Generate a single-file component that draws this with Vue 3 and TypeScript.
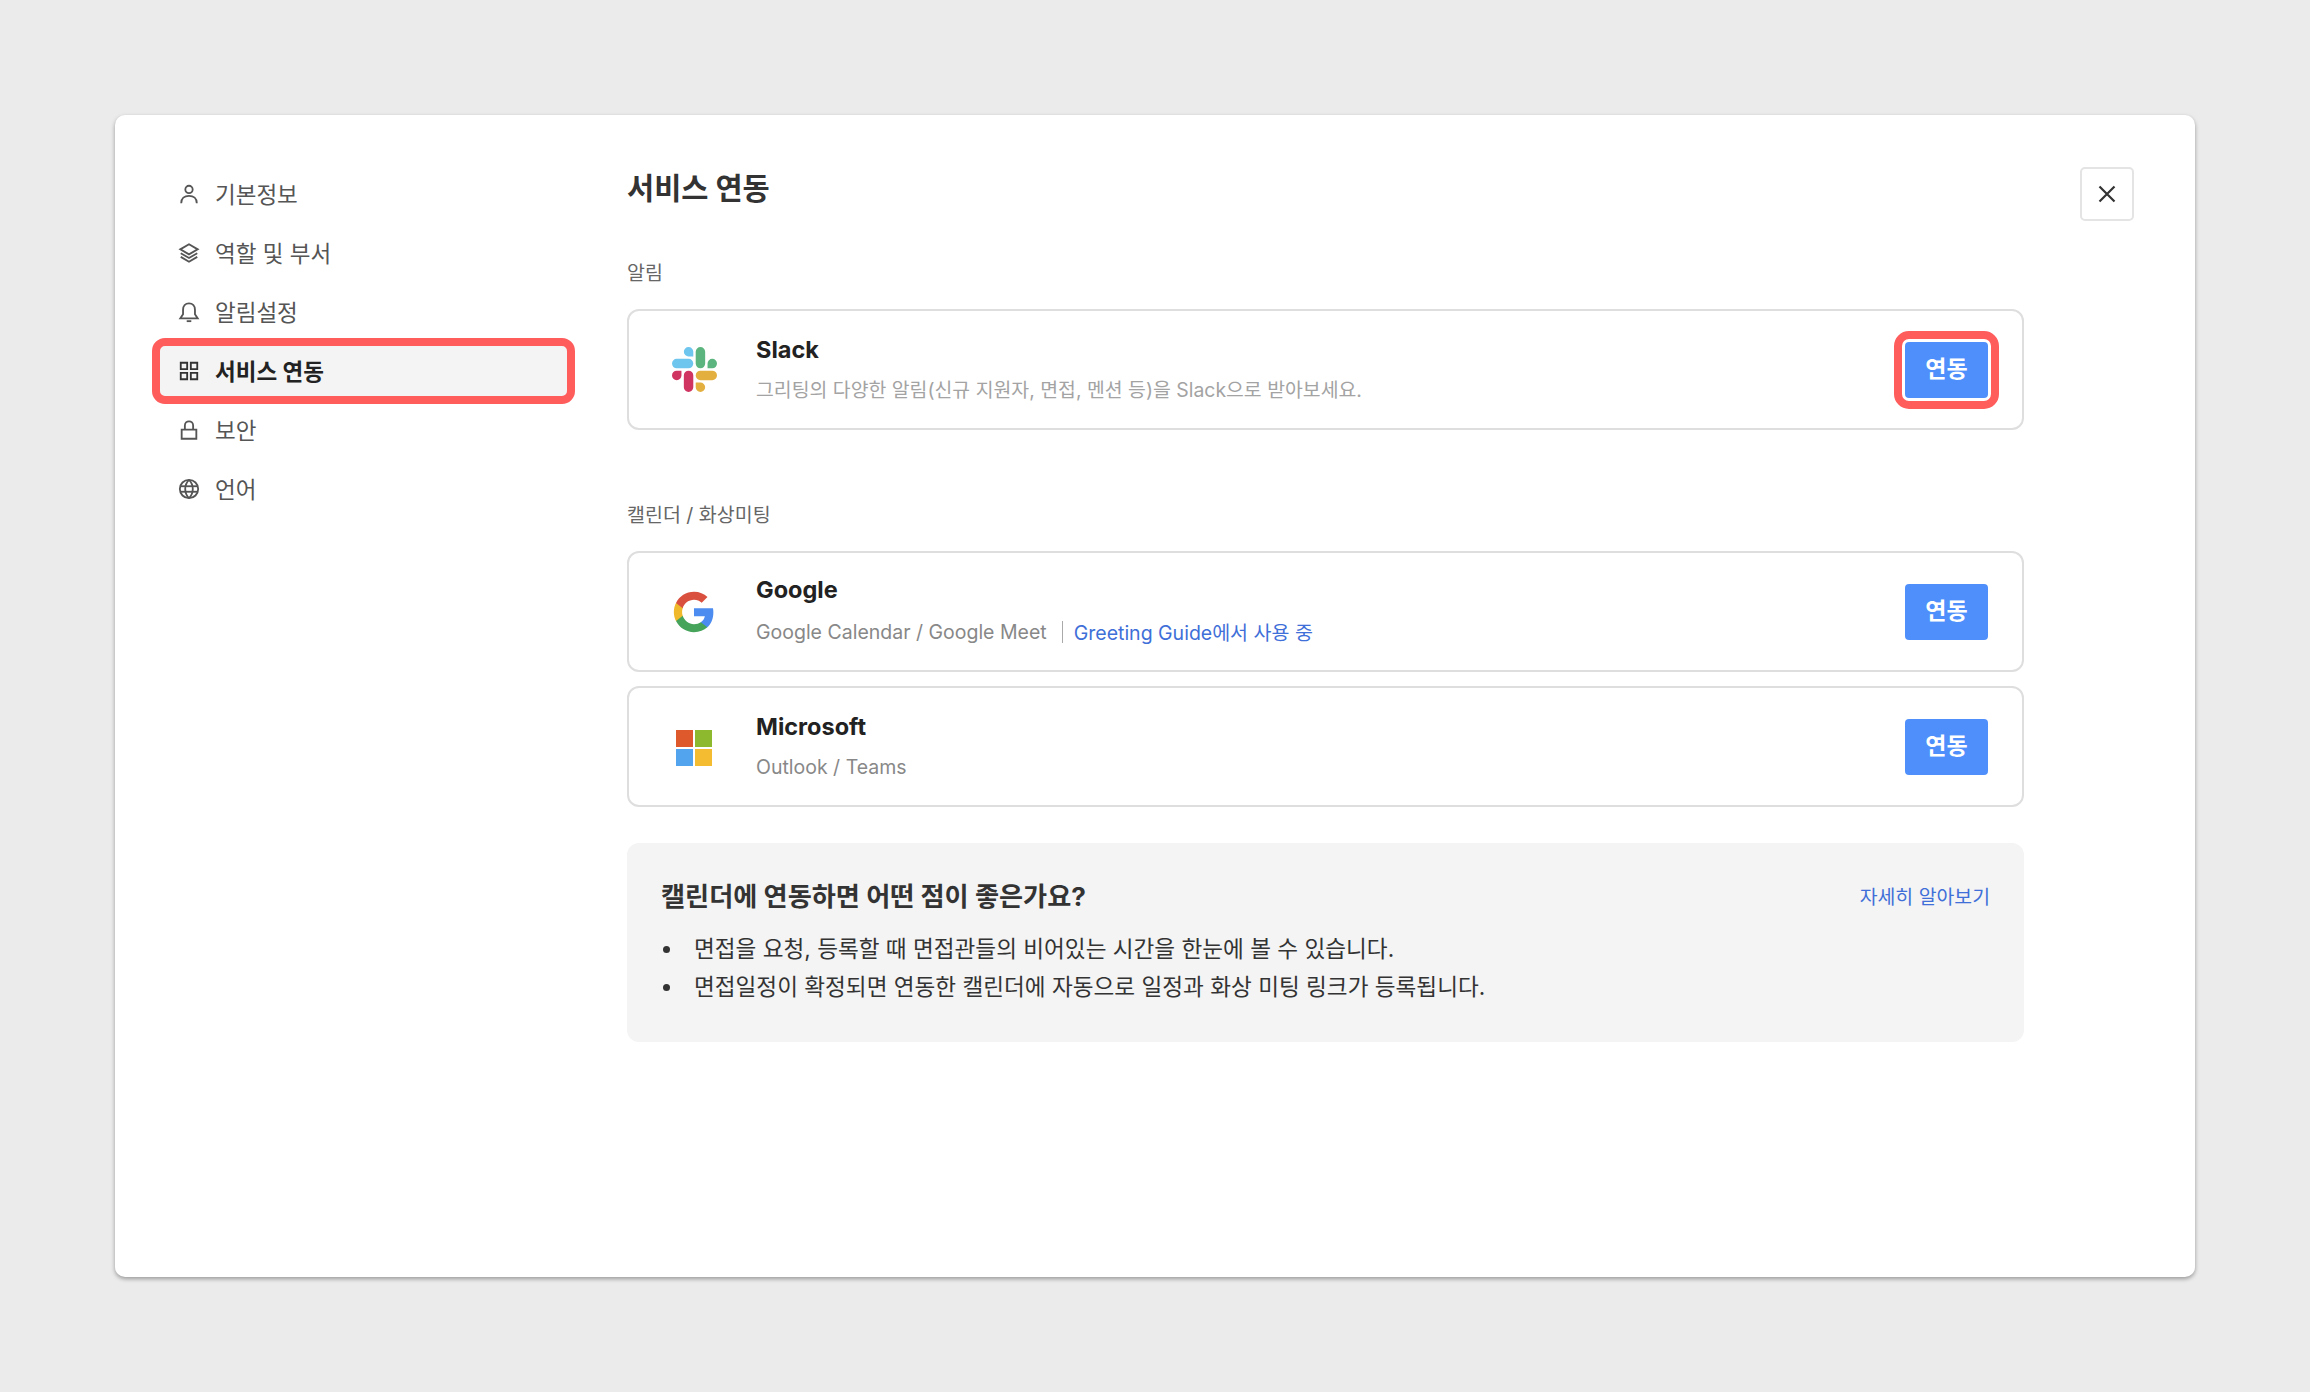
<template>
  <div class="page">
    <div class="dialog">
      <nav class="side">
        <a
          v-for="item in menu"
          :key="item.label"
          class="side-item"
          :class="{ active: item.active }"
        >
          <svg class="side-icon" viewBox="0 0 24 24" fill="none">
            <path v-for="(d, i) in item.paths" :key="i" :d="d" />
          </svg>
          <span>{{ item.label }}</span>
        </a>
      </nav>

      <main class="main">
        <h1 class="title">서비스 연동</h1>

        <div class="label first">알림</div>
        <div class="card">
          <div class="logo">
            <svg width="45" height="45" viewBox="0 0 24 24">
              <path fill="#cf3560" d="M5.042 15.165a2.528 2.528 0 0 1-2.52 2.523A2.528 2.528 0 0 1 0 15.165a2.527 2.527 0 0 1 2.522-2.52h2.52v2.52zM6.313 15.165a2.527 2.527 0 0 1 2.521-2.52 2.527 2.527 0 0 1 2.521 2.52v6.313A2.528 2.528 0 0 1 8.834 24a2.528 2.528 0 0 1-2.521-2.522v-6.313z" />
              <path fill="#6ec6ee" d="M8.834 5.042a2.528 2.528 0 0 1-2.521-2.52A2.528 2.528 0 0 1 8.834 0a2.528 2.528 0 0 1 2.521 2.522v2.52H8.834zM8.834 6.313a2.528 2.528 0 0 1 2.521 2.521 2.528 2.528 0 0 1-2.521 2.521H2.522A2.528 2.528 0 0 1 0 8.834a2.528 2.528 0 0 1 2.522-2.521h6.312z" />
              <path fill="#5cb57f" d="M18.956 8.834a2.528 2.528 0 0 1 2.522-2.521A2.528 2.528 0 0 1 24 8.834a2.528 2.528 0 0 1-2.522 2.521h-2.522V8.834zM17.688 8.834a2.528 2.528 0 0 1-2.523 2.521 2.527 2.527 0 0 1-2.52-2.521V2.522A2.527 2.527 0 0 1 15.165 0a2.528 2.528 0 0 1 2.523 2.522v6.312z" />
              <path fill="#e3b040" d="M15.165 18.956a2.528 2.528 0 0 1 2.523 2.522A2.528 2.528 0 0 1 15.165 24a2.527 2.527 0 0 1-2.52-2.522v-2.522h2.52zM15.165 17.688a2.527 2.527 0 0 1-2.52-2.523 2.526 2.526 0 0 1 2.52-2.52h6.313A2.527 2.527 0 0 1 24 15.165a2.528 2.528 0 0 1-2.522 2.523h-6.313z" />
            </svg>
          </div>
          <div class="info">
            <div class="name">Slack</div>
            <div class="desc light">그리팅의 다양한 알림(신규 지원자, 면접, 멘션 등)을 Slack으로 받아보세요.</div>
          </div>
          <button class="link-btn marked"><span>연동</span></button>
        </div>

        <div class="label second">캘린더 / 화상미팅</div>
        <div class="card">
          <div class="logo">
            <svg width="44" height="44" viewBox="0 0 24 24">
              <path fill="#4c8bf0" d="M22.56 12.25c0-.78-.07-1.53-.2-2.25H12v4.26h5.92c-.26 1.37-1.04 2.53-2.21 3.31v2.77h3.57c2.08-1.92 3.28-4.74 3.28-8.09z" />
              <path fill="#45a35a" d="M12 23c2.97 0 5.46-.98 7.28-2.66l-3.57-2.77c-.98.66-2.23 1.06-3.71 1.06-2.86 0-5.29-1.93-6.16-4.53H2.18v2.84C3.99 20.53 7.7 23 12 23z" />
              <path fill="#f0b92c" d="M5.84 14.09c-.22-.66-.35-1.36-.35-2.09s.13-1.43.35-2.09V7.07H2.18C1.43 8.55 1 10.22 1 12s.43 3.45 1.18 4.93l2.85-2.22.81-.62z" />
              <path fill="#d9503f" d="M12 5.38c1.62 0 3.06.56 4.21 1.64l3.15-3.15C17.45 2.09 14.97 1 12 1 7.7 1 3.99 3.47 2.18 7.07l3.66 2.84c.87-2.6 3.3-4.53 6.16-4.53z" />
            </svg>
          </div>
          <div class="info">
            <div class="name">Google</div>
            <div class="desc">
              <span>Google Calendar / Google Meet</span>
              <i class="bar"></i>
              <span class="used">Greeting Guide에서 사용 중</span>
            </div>
          </div>
          <button class="link-btn"><span>연동</span></button>
        </div>
        <div class="card next">
          <div class="logo">
            <div class="ms">
              <b style="background: #de5a2c"></b>
              <b style="background: #8db92e"></b>
              <b style="background: #52a4ee"></b>
              <b style="background: #f4bc30"></b>
            </div>
          </div>
          <div class="info">
            <div class="name">Microsoft</div>
            <div class="desc">Outlook / Teams</div>
          </div>
          <button class="link-btn"><span>연동</span></button>
        </div>

        <section class="note">
          <div class="note-head">
            <strong>캘린더에 연동하면 어떤 점이 좋은가요?</strong>
            <a class="more">자세히 알아보기</a>
          </div>
          <ul>
            <li>면접을 요청, 등록할 때 면접관들의 비어있는 시간을 한눈에 볼 수 있습니다.</li>
            <li>면접일정이 확정되면 연동한 캘린더에 자동으로 일정과 화상 미팅 링크가 등록됩니다.</li>
          </ul>
        </section>
      </main>

      <button class="close" aria-label="닫기">
        <svg width="22" height="22" viewBox="0 0 22 22" fill="none">
          <path d="M3.5 3.5l15 15M18.5 3.5l-15 15" stroke="#333" stroke-width="2.2" />
        </svg>
      </button>
    </div>
  </div>
</template>

<script setup lang="ts">
interface MenuItem {
  label: string
  paths: string[]
  active?: boolean
}

const menu: MenuItem[] = [
  {
    label: '기본정보',
    paths: ['M12 3a4 4 0 1 1 0 8 4 4 0 0 1 0-8z', 'M3.5 22c0-5 3.5-8 8.5-8s8.5 3 8.5 8'],
  },
  {
    label: '역할 및 부서',
    paths: [
      'M12 2.5l9.5 5.5-9.5 5.5L2.5 8z',
      'M3 12.2l9 5.3 9-5.3',
      'M3 16.2l9 5.3 9-5.3',
    ],
  },
  {
    label: '알림설정',
    paths: [
      'M12 2.5c-4 0-6.5 3-6.5 7v5L2.5 19h19l-3-4.5v-5c0-4-2.5-7-6.5-7z',
      'M9.5 22h5',
    ],
  },
  {
    label: '서비스 연동',
    active: true,
    paths: [
      'M3 3h7v7H3z',
      'M14 3h7v7h-7z',
      'M3 14h7v7H3z',
      'M14 14h7v7h-7z',
    ],
  },
  {
    label: '보안',
    paths: ['M4 11.5h16v10H4z', 'M7.5 11.5V7a4.5 4.5 0 0 1 9 0v4.5'],
  },
  {
    label: '언어',
    paths: [
      'M12 2a10 10 0 1 1 0 20 10 10 0 0 1 0-20z',
      'M12 2c-5.5 5.5-5.5 14.5 0 20',
      'M12 2c5.5 5.5 5.5 14.5 0 20',
      'M2.5 9h19',
      'M2.5 15h19',
    ],
  },
]
</script>

<style>
html,
body {
  margin: 0;
  background: #ebebeb;
}
</style>

<style scoped>
.page {
  width: 2310px;
  height: 1392px;
  box-sizing: border-box;
  padding: 115px;
  font-family: Inter, "Noto Sans CJK KR", sans-serif;
  color: #222;
}

.dialog {
  width: 2080px;
  height: 1162px;
  box-sizing: border-box;
  display: flex;
  align-items: flex-start;
  padding: 52px 0 0 45px;
  background: #fff;
  border-radius: 10px;
  box-shadow: 0 2px 4px rgba(0, 0, 0, 0.35);
}

.side {
  width: 407px;
  flex: none;
  display: flex;
  flex-direction: column;
  gap: 9px;
  padding-top: 2px;
}

.side-item {
  height: 50px;
  display: flex;
  align-items: center;
  gap: 15px;
  padding-left: 18px;
  font-size: 22.5px;
  color: #555;
  border-radius: 5px;
}

.side-item span {
  margin-bottom: 3px;
}

.side-item.active {
  background: #f4f4f4;
  color: #222;
  font-weight: 700;
  outline: 8px solid #ff5c5c;
}

.side-icon {
  width: 22px;
  height: 22px;
  stroke: #555;
  stroke-width: 2;
}

.active .side-icon {
  stroke: #333;
}

.main {
  width: 1397px;
  flex: none;
  margin-left: 60px;
}

.title {
  margin: 0;
  height: 40px;
  font-size: 29.5px;
  line-height: 43px;
  font-weight: 700;
  color: #333;
}

.label {
  height: 28px;
  font-size: 19.5px;
  line-height: 31px;
  color: #666;
  margin-bottom: 23px;
}

.label.first {
  margin-top: 51px;
}

.label.second {
  margin-top: 70px;
}

.card {
  height: 121px;
  box-sizing: border-box;
  display: flex;
  align-items: center;
  padding: 0 34px 0 40px;
  border: 2px solid #dedede;
  border-radius: 12px;
}

.card.next {
  margin-top: 14px;
}

.logo {
  width: 50px;
  flex: none;
  display: flex;
  justify-content: center;
}

.logo svg {
  display: block;
}

.ms {
  width: 36px;
  height: 36px;
  margin-top: 3px;
  display: grid;
  grid-template-columns: 1fr 1fr;
  gap: 2px;
}

.info {
  flex: 1;
  margin-left: 37px;
}

.name {
  font-size: 23.5px;
  line-height: 32px;
  font-weight: 700;
  color: #222;
  margin-bottom: 8px;
}

.desc {
  display: flex;
  align-items: center;
  font-size: 19.5px;
  line-height: 32px;
  color: #888;
}

.desc.light {
  font-size: 19.4px;
  color: #a3a3a3;
}

.bar {
  width: 1px;
  height: 22px;
  margin: 0 11px 0 15px;
  background: #aaa;
}

.used {
  margin-top: 3px;
  color: #3f6fd8;
}

.link-btn {
  width: 83px;
  height: 56px;
  padding: 0;
  border: 0;
  border-radius: 4px;
  background: #4f8ffb;
  color: #fff;
  font-family: inherit;
  font-size: 23px;
  font-weight: 700;
}

.link-btn span {
  display: block;
  margin-bottom: 5px;
}

.link-btn.marked {
  outline: 8px solid #ff5c5c;
  outline-offset: 3px;
}

.note {
  height: 199px;
  box-sizing: border-box;
  margin-top: 36px;
  padding: 32px 34px 0;
  background: #f4f4f4;
  border-radius: 12px;
}

.note-head {
  display: flex;
  justify-content: space-between;
  align-items: center;
  height: 40px;
}

.note-head strong {
  font-size: 26.2px;
  font-weight: 700;
  color: #333;
}

.more {
  font-size: 19.4px;
  color: #3f6fd8;
}

.note ul {
  margin: 15px 0 0;
  padding: 0;
  list-style: none;
  font-size: 22.6px;
  line-height: 38px;
  color: #333;
}

.note li {
  display: flex;
  align-items: center;
}

.note li::before {
  content: "";
  width: 7px;
  height: 7px;
  margin: 0 24px 0 2px;
  border-radius: 50%;
  background: #333;
}

.close {
  width: 54px;
  height: 54px;
  flex: none;
  margin: 0 0 0 56px;
  padding: 0;
  display: flex;
  align-items: center;
  justify-content: center;
  background: #fff;
  border: 2px solid #e4e4e4;
  border-radius: 5px;
}
</style>
